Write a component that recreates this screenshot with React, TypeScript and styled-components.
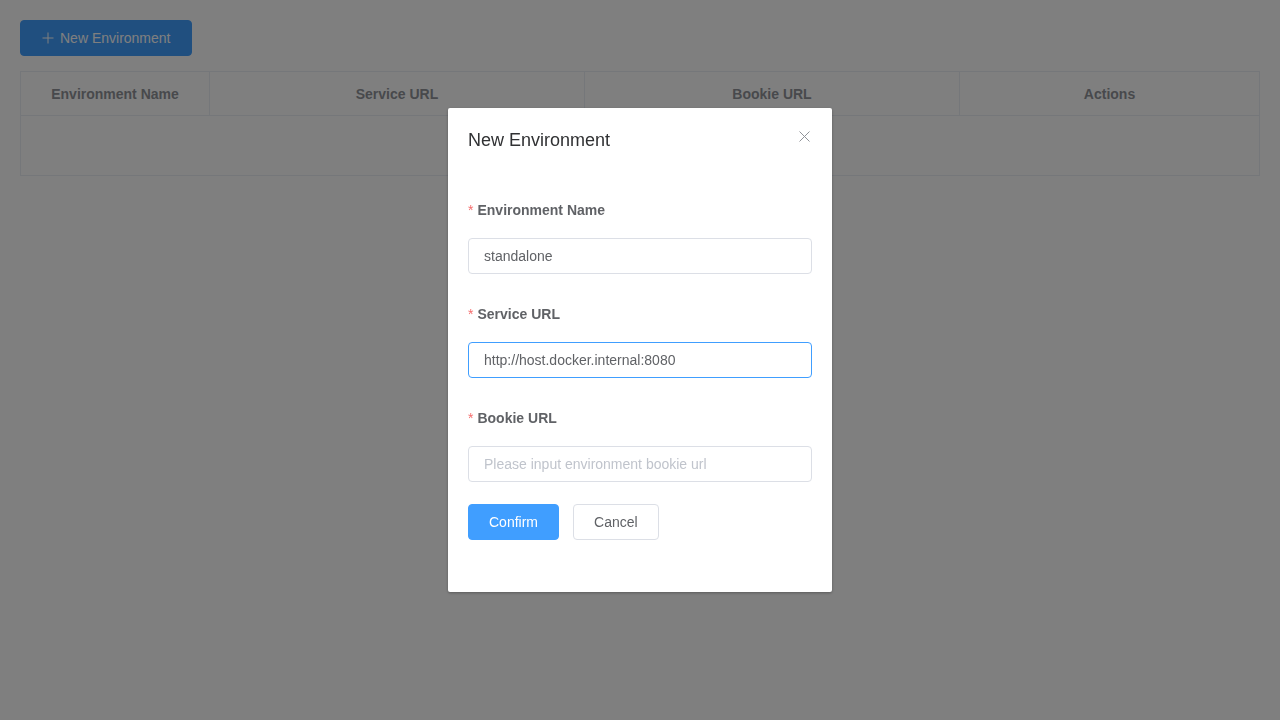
import styled, { createGlobalStyle } from "styled-components";

const GlobalStyle = createGlobalStyle`
  html, body {
    margin: 0;
    padding: 0;
    background: #fff;
    font-family: "Liberation Sans", Arial, sans-serif;
    -webkit-font-smoothing: antialiased;
  }
  * {
    box-sizing: border-box;
  }
`;

const Page = styled.div`
  padding: 20px;
  min-height: 720px;
`;

const Button = styled.button<{ $primary?: boolean }>`
  display: inline-flex;
  align-items: center;
  gap: 5px;
  height: 36px;
  padding: 0 20px;
  font-family: inherit;
  font-size: 14px;
  line-height: 1;
  border-radius: 4px;
  border: 1px solid ${(p) => (p.$primary ? "#409eff" : "#dcdfe6")};
  background: ${(p) => (p.$primary ? "#409eff" : "#fff")};
  color: ${(p) => (p.$primary ? "#fff" : "#606266")};
  cursor: pointer;
`;

const Table = styled.div`
  margin-top: 15px;
  border: 1px solid #ebeef5;
`;

const HeaderRow = styled.div`
  display: grid;
  grid-template-columns: 188px 375px 375px 1fr;
  height: 44px;
  border-bottom: 1px solid #ebeef5;
`;

const HeaderCell = styled.div`
  display: flex;
  align-items: center;
  justify-content: center;
  font-size: 14px;
  font-weight: bold;
  color: #909399;
  & + & {
    border-left: 1px solid #ebeef5;
  }
`;

const EmptyBlock = styled.div`
  height: 59px;
  display: flex;
  align-items: center;
  justify-content: center;
  font-size: 14px;
  color: #909399;
`;

const Overlay = styled.div`
  position: fixed;
  inset: 0;
  background: rgba(0, 0, 0, 0.5);
  overflow: auto;
`;

const Dialog = styled.div`
  width: 30%;
  margin: 15vh auto 0;
  background: #fff;
  border-radius: 2px;
  box-shadow: 0 1px 3px rgba(0, 0, 0, 0.3);
`;

const DialogHeader = styled.div`
  display: flex;
  justify-content: space-between;
  align-items: flex-start;
  padding: 20px 20px 10px;
`;

const DialogTitle = styled.span`
  font-size: 18px;
  line-height: 24px;
  color: #303133;
`;

const CloseButton = styled.button`
  border: none;
  background: none;
  padding: 0;
  width: 16px;
  height: 16px;
  display: flex;
  align-items: center;
  justify-content: center;
  color: #909399;
  cursor: pointer;
`;

const DialogBody = styled.div`
  padding: 30px 20px;
`;

const FormItem = styled.div`
  margin-bottom: 22px;
`;

const Label = styled.label`
  display: block;
  line-height: 36px;
  padding-bottom: 10px;
  font-size: 14px;
  font-weight: bold;
  color: #606266;

  &::before {
    content: "*";
    color: #f56c6c;
    margin-right: 4px;
    font-weight: normal;
  }
`;

const Input = styled.input<{ $focused?: boolean }>`
  display: block;
  width: 100%;
  height: 36px;
  padding: 0 15px;
  font-family: inherit;
  font-size: 14px;
  color: #606266;
  border-radius: 4px;
  border: 1px solid ${(p) => (p.$focused ? "#409eff" : "#dcdfe6")};
  outline: none;

  &::placeholder {
    color: #c0c4cc;
  }
`;

const Actions = styled.div`
  display: flex;
  gap: 14px;
  margin-bottom: 22px;
`;

const PlusIcon = () => (
  <svg width="14" height="14" viewBox="0 0 14 14" fill="none">
    <path d="M7 1.5v11M1.5 7h11" stroke="currentColor" strokeWidth="1" />
  </svg>
);

const CloseIcon = () => (
  <svg width="11" height="11" viewBox="0 0 11 11" fill="none">
    <path d="M0.5 0.5l10 10M10.5 0.5l-10 10" stroke="currentColor" strokeWidth="1" />
  </svg>
);

const columns = ["Environment Name", "Service URL", "Bookie URL", "Actions"];

const App = () => {
  return (
    <>
      <GlobalStyle />
      <Page>
        <Button $primary>
          <PlusIcon />
          New Environment
        </Button>

        <Table>
          <HeaderRow>
            {columns.map((c) => (
              <HeaderCell key={c}>{c}</HeaderCell>
            ))}
          </HeaderRow>
          <EmptyBlock>No Data</EmptyBlock>
        </Table>
      </Page>

      <Overlay>
        <Dialog>
          <DialogHeader>
            <DialogTitle>New Environment</DialogTitle>
            <CloseButton aria-label="Close">
              <CloseIcon />
            </CloseButton>
          </DialogHeader>

          <DialogBody>
            <FormItem>
              <Label>Environment Name</Label>
              <Input defaultValue="standalone" />
            </FormItem>

            <FormItem>
              <Label>Service URL</Label>
              <Input $focused defaultValue="http://host.docker.internal:8080" />
            </FormItem>

            <FormItem>
              <Label>Bookie URL</Label>
              <Input placeholder="Please input environment bookie url" />
            </FormItem>

            <Actions>
              <Button $primary>Confirm</Button>
              <Button>Cancel</Button>
            </Actions>
          </DialogBody>
        </Dialog>
      </Overlay>
    </>
  );
};

export default App;
